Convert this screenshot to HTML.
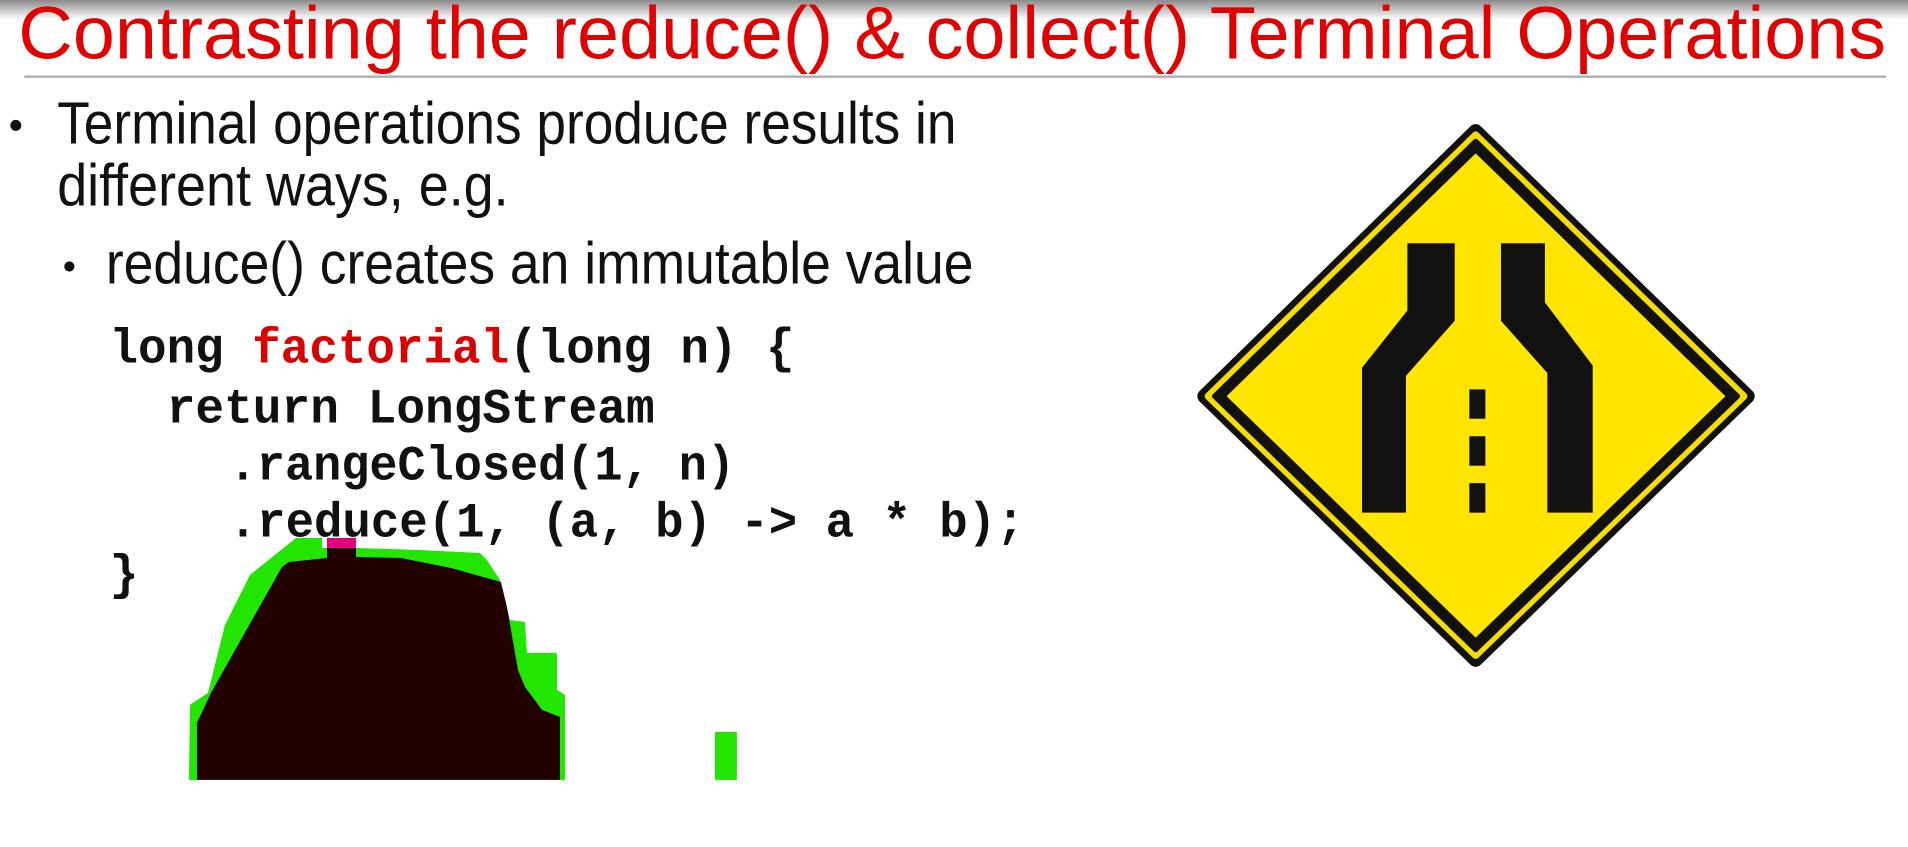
<!DOCTYPE html>
<html><head><meta charset="utf-8"><style>html,body{margin:0;padding:0;background:#fff;overflow:hidden}svg{display:block}</style></head>
<body>
<svg width="1908" height="847" viewBox="0 0 1568 696.04" xmlns="http://www.w3.org/2000/svg">
<defs><linearGradient id="tg" x1="0" y1="0" x2="0" y2="1"><stop offset="0" stop-color="#8a8a8a"/><stop offset="1" stop-color="#ffffff"/></linearGradient></defs>
<rect width="1568" height="697" fill="#fff"/>
<rect width="1568" height="16" fill="url(#tg)"/>
<text x="15" y="48" font-family="Liberation Sans, sans-serif" font-size="61" fill="#e00000" textLength="1535" lengthAdjust="spacingAndGlyphs">Contrasting the reduce() &amp; collect() Terminal Operations</text>
<rect x="20" y="62" width="1530" height="2" fill="#b0b0b0"/>
<g font-family="Liberation Sans, sans-serif" font-size="49" fill="#111">
<circle cx="13" cy="103" r="4.5"/>
<text x="47" y="118" textLength="739" lengthAdjust="spacingAndGlyphs">Terminal operations produce results in</text>
<text x="47" y="169" textLength="371" lengthAdjust="spacingAndGlyphs">different ways, e.g.</text>
<circle cx="57" cy="219" r="4.2"/>
<text x="87" y="233" textLength="713" lengthAdjust="spacingAndGlyphs">reduce() creates an immutable value</text>
</g>
<g font-family="Liberation Mono, monospace" font-weight="bold" font-size="40" fill="#111">
<text x="90" y="298" textLength="563" lengthAdjust="spacingAndGlyphs">long <tspan fill="#d80000">factorial</tspan>(long n) {</text>
<text x="137" y="347" textLength="401" lengthAdjust="spacingAndGlyphs">return LongStream</text>
<text x="188" y="394" textLength="416" lengthAdjust="spacingAndGlyphs">.rangeClosed(1, n)</text>
<text x="188" y="441" textLength="654" lengthAdjust="spacingAndGlyphs">.reduce(1, (a, b) -&gt; a * b);</text>
<text x="90" y="484">}</text>
</g>
<g transform="scale(0.8217)">
<polygon fill="#22e600" points="189,780 190,705 208,693 225,625 250,575 296,538 322,538 322,548 356,548 420,550 480,553 487,560 500,580 510,620 525,622 527,653 557,653 557,690 565,695 565,780"/>
<polygon fill="#230000" points="197,780 197,723 211,693 282,567 289,562 327,558 327,548 356,548 356,557 401,558 451,568 501,582 507,607 518,670 525,687 542,710 560,717 560,780"/>
<rect x="327" y="538" width="29" height="10" fill="#e0007a"/>
<rect x="715" y="732" width="22" height="48" fill="#22e600"/>
</g>
<g stroke-linejoin="round">
<polygon points="1212.7,108 1436,325.6 1212.7,542 990,325.6" fill="#111" stroke="#111" stroke-width="12"/>
<polygon points="1212.7,111 1433,325.6 1212.7,538.5 993,325.6" fill="#f6dc00" stroke="#f6dc00" stroke-width="6"/>
<polygon points="1212.7,116 1428,325.6 1212.7,534 998,325.6" fill="#111" stroke="#111" stroke-width="4"/>
<polygon points="1212.7,126 1418,325.6 1212.7,524 1008,325.6" fill="#ffe500"/>
</g>
<g fill="#111">
<polygon points="1156.6,199.9 1195.5,199.9 1195.5,263.6 1155.4,308.9 1155.4,421.3 1119.3,421.3 1119.3,302.2 1156.6,255.2"/>
<polygon points="1233.5,199.9 1269.6,199.9 1269.6,248.5 1308.9,300.5 1308.9,421.3 1271.6,421.3 1271.6,306.5 1233.5,263.6"/>
<rect x="1207.5" y="320" width="13.2" height="24.1"/>
<rect x="1207.5" y="358.5" width="13.2" height="24.2"/>
<rect x="1207.5" y="397" width="13.2" height="24.3"/>
</g>
</svg>
</body></html>
